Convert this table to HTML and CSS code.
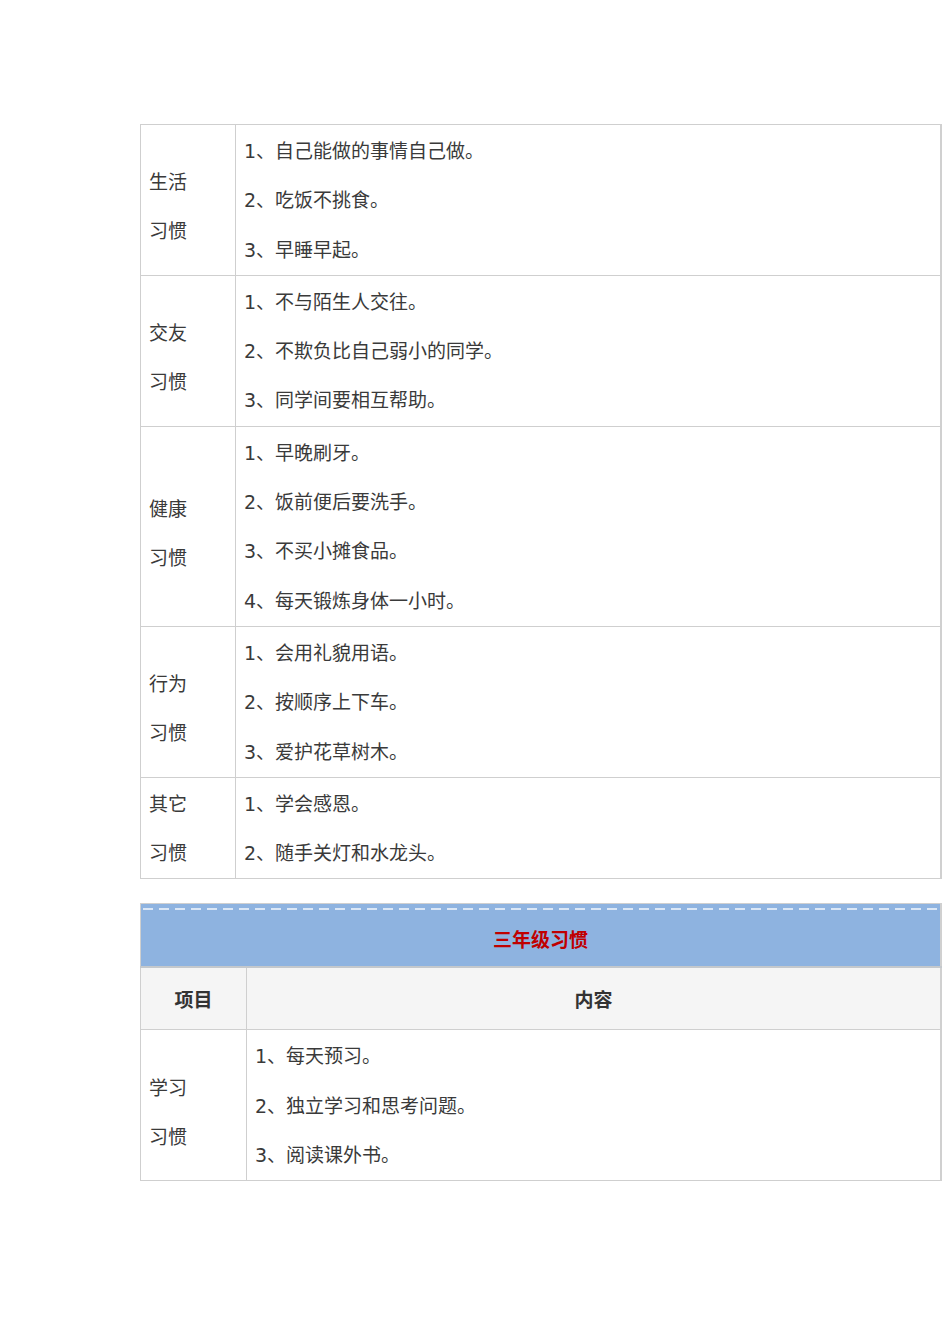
FILE: index.html
```html
<!DOCTYPE html>
<html lang="zh">
<head>
<meta charset="utf-8">
<link rel="stylesheet" href="styles.css">
</head>
<body>
<div class="page">
  <table class="habits habits-a">
    <colgroup><col class="c1"><col></colgroup>
    <tr>
      <td class="label"><p>生活</p><p>习惯</p></td>
      <td class="items"><p>1、自己能做的事情自己做。</p><p>2、吃饭不挑食。</p><p>3、早睡早起。</p></td>
    </tr>
    <tr>
      <td class="label"><p>交友</p><p>习惯</p></td>
      <td class="items"><p>1、不与陌生人交往。</p><p>2、不欺负比自己弱小的同学。</p><p>3、同学间要相互帮助。</p></td>
    </tr>
    <tr>
      <td class="label"><p>健康</p><p>习惯</p></td>
      <td class="items"><p>1、早晚刷牙。</p><p>2、饭前便后要洗手。</p><p>3、不买小摊食品。</p><p>4、每天锻炼身体一小时。</p></td>
    </tr>
    <tr>
      <td class="label"><p>行为</p><p>习惯</p></td>
      <td class="items"><p>1、会用礼貌用语。</p><p>2、按顺序上下车。</p><p>3、爱护花草树木。</p></td>
    </tr>
    <tr>
      <td class="label label-flat"><p>其它</p><p>习惯</p></td>
      <td class="items"><p>1、学会感恩。</p><p>2、随手关灯和水龙头。</p></td>
    </tr>
  </table>

  <table class="habits habits-b">
    <colgroup><col class="c1b"><col></colgroup>
    <tr>
      <th class="title" colspan="2">三年级习惯</th>
    </tr>
    <tr class="head">
      <th>项目</th>
      <th>内容</th>
    </tr>
    <tr>
      <td class="label"><p>学习</p><p>习惯</p></td>
      <td class="items"><p>1、每天预习。</p><p>2、独立学习和思考问题。</p><p>3、阅读课外书。</p></td>
    </tr>
  </table>
</div>
</body>
</html>
```

FILE: styles.css
```css
html, body {
  margin: 0;
  padding: 0;
  background: #ffffff;
}

body {
  font-family: "DejaVu Sans", "Noto Sans CJK SC", sans-serif;
  font-size: 19px;
  color: #3a3a3a;
}

.page {
  padding: 124px 0 0 140px;
  width: 802px;
}

.habits {
  width: 802px;
  border-collapse: collapse;
  table-layout: fixed;
  border-right: 2px solid #d0d0d0;
}

.habits td,
.habits th {
  border: 1px solid #cfcfcf;
  padding: 0;
}

.habits p {
  margin: 0;
  line-height: 49.3px;
  white-space: nowrap;
}

.c1 { width: 95px; }
.c1b { width: 106px; }

.label {
  vertical-align: middle;
  padding: 15px 0 0 8px !important;
}

.label-flat {
  padding-top: 2px !important;
  vertical-align: top;
}

.items {
  vertical-align: top;
  padding: 2px 0 0 8px !important;
}

.habits-b {
  margin-top: 24px;
}

.title {
  height: 56px;
  background-color: #8eb3e0;
  background-image: repeating-linear-gradient(to right, #dbe7f6 0 10px, transparent 10px 16px);
  background-size: 100% 2px;
  background-position: 2px 4px;
  background-repeat: no-repeat;
  color: #c00000;
  font-weight: bold;
  text-align: center;
  padding-top: 6px !important;
  border-bottom: 2px solid #c4c8cc !important;
}

.head th {
  height: 61px;
  background: #f5f5f5;
  font-weight: bold;
  color: #333333;
  text-align: center;
}
```
